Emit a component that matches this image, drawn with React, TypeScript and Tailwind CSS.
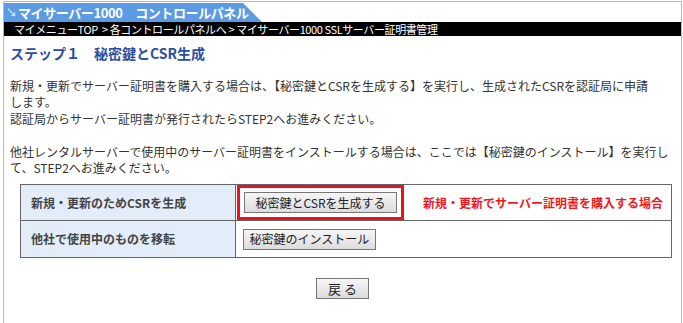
export default function App() {
  const jp = { fontFamily: '"Noto Sans CJK JP", "Noto Sans", sans-serif' };
  return (
    <div className="h-[323px] bg-white pt-px pl-[3px] pr-px" style={jp}>
      <div className="h-full border-t border-l border-r border-[#b9b9b9]">
        {/* Title tab */}
        <div className="h-[20px] pt-px">
          <div className="flex h-[19px] w-[258px] items-center whitespace-nowrap bg-[#5b9be3] pl-[2px] [clip-path:polygon(0_0,calc(100%-19px)_0,100%_100%,0_100%)]">
            <span className="mr-px text-[11px] font-bold leading-none text-[#cfe6ff]">↘</span>
            <span className="text-[13px] font-bold leading-none tracking-[-0.4px] text-white">
              マイサーバー1000　コントロールパネル
            </span>
          </div>
        </div>
        {/* Breadcrumb */}
        <div className="flex h-[14px] items-center whitespace-pre bg-black pl-[10px] text-[11px] leading-none tracking-[-0.4px] text-white">
          {'マイメニューTOP  > 各コントロールパネルへ > マイサーバー1000 SSLサーバー証明書管理'}
        </div>

        <div className="px-[6px]">
          <h1 className="mt-[8px] text-[14px] font-bold leading-[18px] text-[#2b4f9e]">
            ステップ１　秘密鍵とCSR生成
          </h1>
          <div className="mt-[16px] whitespace-nowrap text-[12px] leading-[16.4px] text-[#333]">
            <p>新規・更新でサーバー証明書を購入する場合は、【秘密鍵とCSRを生成する】を実行し、生成されたCSRを認証局に申請</p>
            <p>します。</p>
            <p>認証局からサーバー証明書が発行されたらSTEP2へお進みください。</p>
            <p className="h-[16.4px]"></p>
            <p>他社レンタルサーバーで使用中のサーバー証明書をインストールする場合は、ここでは【秘密鍵のインストール】を実行し</p>
            <p>て、STEP2へお進みください。</p>
          </div>

          <table className="ml-[10px] mt-[8px] w-[652px] border-collapse text-[12px]">
            <tbody>
              <tr className="h-[36px]">
                <td className="w-[215px] border border-[#666] bg-[#e3edf9] pl-[10px] font-bold text-[#444]">
                  新規・更新のためCSRを生成
                </td>
                <td className="border border-[#666] p-0">
                  <div className="flex items-center">
                    <div className="ml-px border-[3px] border-[#e8141c] px-[4px] py-[4px]">
                      <button className="h-[21px] w-[153px] border border-[#777] bg-gradient-to-b from-[#f6f6f6] to-[#dcdcdc] text-[12px] text-[#222]">
                        秘密鍵とCSRを生成する
                      </button>
                    </div>
                    <span className="ml-[19px] font-bold text-[#f01820]">
                      新規・更新でサーバー証明書を購入する場合
                    </span>
                  </div>
                </td>
              </tr>
              <tr className="h-[37px]">
                <td className="border border-[#666] bg-[#e3edf9] pl-[10px] font-bold text-[#444]">
                  他社で使用中のものを移転
                </td>
                <td className="border border-[#666] pl-[7px]">
                  <button className="h-[21px] w-[133px] border border-[#777] bg-gradient-to-b from-[#f6f6f6] to-[#dcdcdc] text-[12px] text-[#222]">
                    秘密鍵のインストール
                  </button>
                </td>
              </tr>
            </tbody>
          </table>

          <div className="mt-[20px] flex justify-center">
            <button className="h-[21px] w-[53px] border border-[#777] bg-gradient-to-b from-[#f6f6f6] to-[#dcdcdc] text-[13px] text-[#222]">
              戻 る
            </button>
          </div>
        </div>
      </div>
    </div>
  );
}
